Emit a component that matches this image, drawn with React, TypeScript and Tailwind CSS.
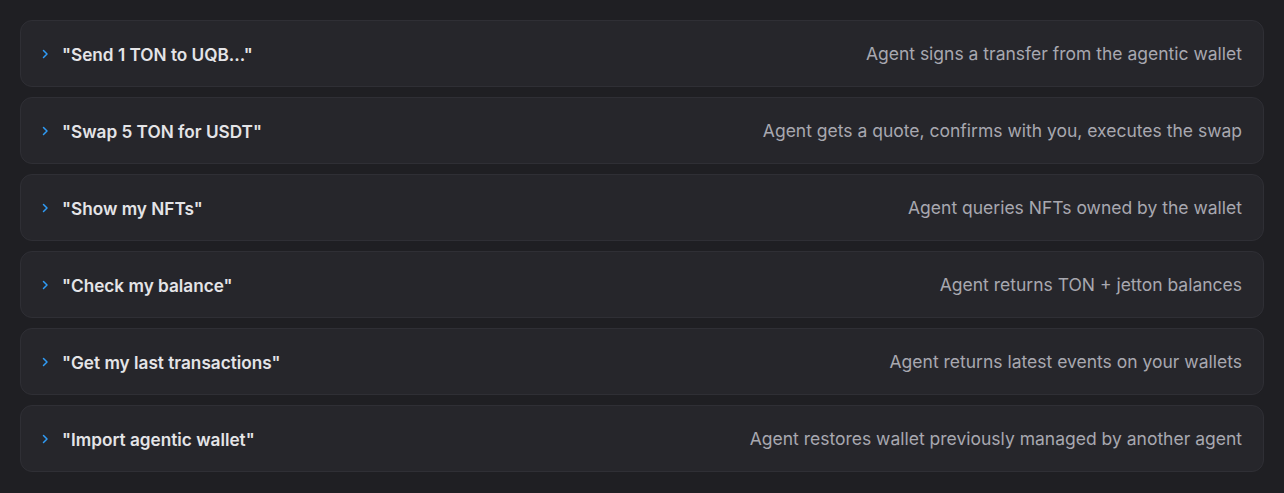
import { useState } from "react";

const rows = [
  { prompt: '"Send 1 TON to UQB..."', result: "Agent signs a transfer from the agentic wallet" },
  { prompt: '"Swap 5 TON for USDT"', result: "Agent gets a quote, confirms with you, executes the swap" },
  { prompt: '"Show my NFTs"', result: "Agent queries NFTs owned by the wallet" },
  { prompt: '"Check my balance"', result: "Agent returns TON + jetton balances" },
  { prompt: '"Get my last transactions"', result: "Agent returns latest events on your wallets" },
  { prompt: '"Import agentic wallet"', result: "Agent restores wallet previously managed by another agent" },
];

function Chevron() {
  return (
    <svg width="8" height="10" viewBox="0 0 8 10" fill="none" className="shrink-0">
      <path d="M1.5 1.5L5 5L1.5 8.5" stroke="#2f9bf5" strokeWidth="1.5" strokeLinecap="round" strokeLinejoin="round" />
    </svg>
  );
}

export default function App() {
  const [open, setOpen] = useState<number | null>(null);

  return (
    <main
      className="min-h-screen w-full bg-[#1f1f23] px-5 pt-5 pb-[22px]"
      style={{ fontFamily: "Inter, 'Noto Sans', sans-serif" }}
    >
      <div className="flex flex-col gap-[10px]">
        {rows.map((row, i) => (
          <button
            key={row.prompt}
            onClick={() => setOpen(open === i ? null : i)}
            className="flex h-[67px] w-full items-center justify-between rounded-xl border border-[#2f2f35] bg-[#26262b] pt-[2px] pr-[21px] pl-[21px] text-left"
          >
            <span className="flex items-center gap-[12px]">
              <Chevron />
              <span className="text-[17.2px] font-semibold text-[#e4e4e7]">{row.prompt}</span>
            </span>
            <span className="text-[17.5px] text-[#a8a8b0]">{row.result}</span>
          </button>
        ))}
      </div>
    </main>
  );
}
